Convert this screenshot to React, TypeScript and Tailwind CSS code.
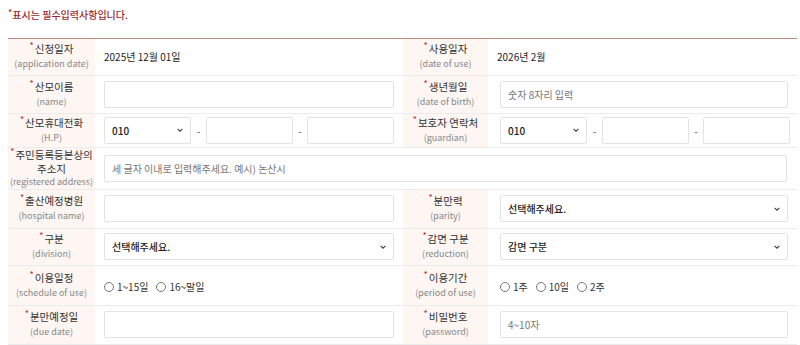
import { ReactNode } from "react";

const font = {
	fontFamily: '"Noto Sans CJK KR", "Noto Sans", sans-serif',
};

function Label({ ko, en, tight = false }: { ko: ReactNode; en: string; tight?: boolean }) {
	return (
		<div
			className={
				"flex flex-col items-center justify-center whitespace-nowrap bg-[#fdf6f3] text-center " +
				(tight ? "leading-[13px]" : "leading-[14px]")
			}
		>
			<div className="text-[10.5px] text-[#333]">
				<span className="relative -top-[4px] mr-[1px] text-[9px] text-[#c0282d]">*</span>
				{ko}
			</div>
			<div className="text-[9px] text-[#888]">({en})</div>
		</div>
	);
}

function Input({ placeholder, className = "" }: { placeholder?: string; className?: string }) {
	return (
		<input
			className={
				"h-[27px] rounded-[2px] border border-[#e3e3e3] bg-white px-[7px] text-[10px] text-[#333] outline-none placeholder:text-[#777] " +
				className
			}
			placeholder={placeholder}
		/>
	);
}

function Select({ value, className = "" }: { value: string; className?: string }) {
	return (
		<div
			className={
				"flex h-[27px] items-center justify-between rounded-[2px] border border-[#e3e3e3] bg-white pl-[7px] pr-[6px] text-[10px] font-medium text-[#222] " +
				className
			}
		>
			<span>{value}</span>
			<svg width="8" height="8" viewBox="0 0 10 10" fill="none">
				<path d="M2 3.5 5 6.5 8 3.5" stroke="#444" strokeWidth="1.4" />
			</svg>
		</div>
	);
}

function Phone() {
	return (
		<div className="flex items-center text-[10px] text-[#555]">
			<Select value="010" className="w-[87px]" />
			<span className="w-[15px] text-center">-</span>
			<Input className="w-[87px]" />
			<span className="w-[14px] text-center">-</span>
			<Input className="w-[87px]" />
		</div>
	);
}

function Radio({ label }: { label: string }) {
	return (
		<label className="mr-[8px] flex items-center gap-[3px] text-[10px] text-[#333]">
			<span className="inline-block h-[10px] w-[10px] rounded-full border border-[#777] bg-white" />
			{label}
		</label>
	);
}

function Cell({ children }: { children: ReactNode }) {
	return <div className="flex items-center px-[9px]">{children}</div>;
}

function Row({ h, children }: { h: string; children: ReactNode }) {
	return (
		<div className={"grid grid-cols-[87px_308px_85px_1fr] border-b border-[#ececec] " + h}>
			{children}
		</div>
	);
}

export default function App() {
	return (
		<div className="h-[345px] w-[800px] overflow-hidden bg-white" style={font}>
			<div className="px-2 pt-[7px] text-[10px] font-medium text-[#9a2c2f]">
				<span className="relative -top-[3px] text-[9px] text-[#c0282d]">*</span>
				표시는 필수입력사항입니다.
			</div>
			<div className="ml-2 mt-[15px] w-[789px] border-t border-[#b98c7c]">
				<Row h="h-[37px]">
					<Label ko="신청일자" en="application date" />
					<Cell>
						<span className="text-[10px] text-[#222]">2025년 12월 01일</span>
					</Cell>
					<Label ko="사용일자" en="date of use" />
					<Cell>
						<span className="text-[10px] text-[#222]">2026년 2월</span>
					</Cell>
				</Row>
				<Row h="h-[38px]">
					<Label ko="산모이름" en="name" />
					<Cell>
						<Input className="w-full" />
					</Cell>
					<Label ko="생년월일" en="date of birth" />
					<Cell>
						<Input className="ml-[3px] w-full" placeholder="숫자 8자리 입력" />
					</Cell>
				</Row>
				<Row h="h-[34px]">
					<Label ko="산모휴대전화" en="H.P" />
					<Cell>
						<Phone />
					</Cell>
					<Label ko="보호자 연락처" en="guardian" />
					<Cell>
						<div className="ml-[3px]">
							<Phone />
						</div>
					</Cell>
				</Row>
				<div className="grid h-[42px] grid-cols-[87px_1fr] border-b border-[#ececec]">
					<Label
						tight
						ko={
							<>
								주민등록등본상의
								<br />
								주소지
							</>
						}
						en="registered address"
					/>
					<div className="flex items-center pl-[9px] pr-[10px]">
						<Input className="w-full" placeholder="세 글자 이내로 입력해주세요. 예시) 논산시" />
					</div>
				</div>
				<Row h="h-[39px]">
					<Label ko="출산예정병원" en="hospital name" />
					<Cell>
						<Input className="w-full" />
					</Cell>
					<Label ko="분만력" en="parity" />
					<Cell>
						<Select value="선택해주세요." className="ml-[3px] w-full" />
					</Cell>
				</Row>
				<Row h="h-[37px]">
					<Label ko="구분" en="division" />
					<Cell>
						<Select value="선택해주세요." className="w-full" />
					</Cell>
					<Label ko="감면 구분" en="reduction" />
					<Cell>
						<Select value="감면 구분" className="ml-[3px] w-full" />
					</Cell>
				</Row>
				<Row h="h-[40px]">
					<Label ko="이용일정" en="schedule of use" />
					<Cell>
						<div className="mt-[3px] flex items-center">
							<Radio label="1~15일" />
							<Radio label="16~말일" />
						</div>
					</Cell>
					<Label ko="이용기간" en="period of use" />
					<Cell>
						<div className="ml-[3px] mt-[3px] flex items-center">
							<Radio label="1주" />
							<Radio label="10일" />
							<Radio label="2주" />
						</div>
					</Cell>
				</Row>
				<Row h="h-[39px]">
					<Label ko="분만예정일" en="due date" />
					<Cell>
						<Input className="w-full" />
					</Cell>
					<Label ko="비밀번호" en="password" />
					<Cell>
						<Input className="ml-[3px] w-full" placeholder="4~10자" />
					</Cell>
				</Row>
			</div>
		</div>
	);
}
